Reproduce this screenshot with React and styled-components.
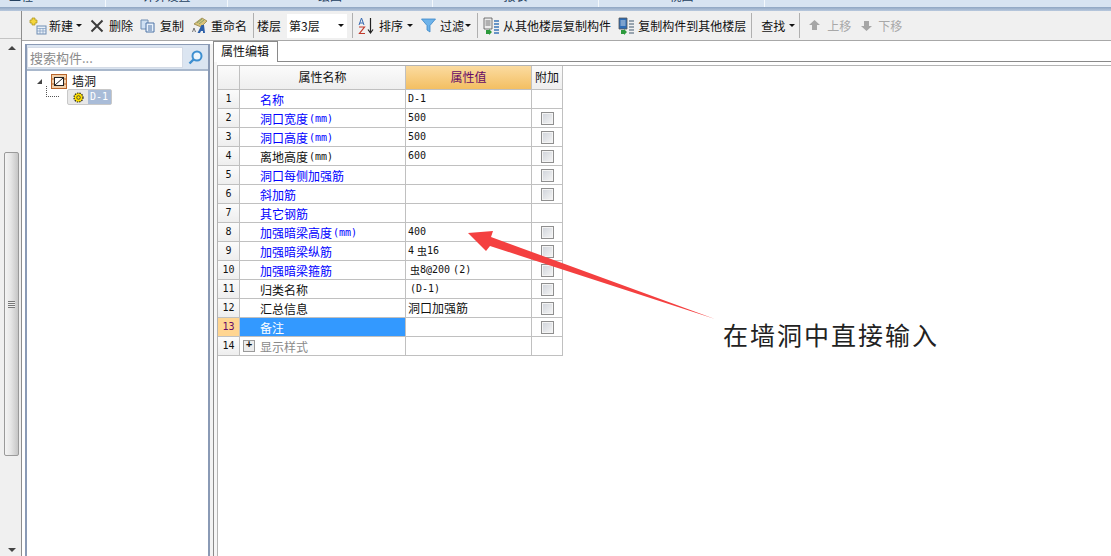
import React from "react";
import styled, { createGlobalStyle } from "styled-components";

const Global = createGlobalStyle`
  html, body { margin: 0; padding: 0; background: #fff; overflow: hidden; }
  body { font-family: "Noto Sans CJK SC", "Liberation Sans", sans-serif; font-size: 12px; color: #111; }
  * { box-sizing: border-box; }
`;

const Page = styled.div`
  position: relative;
  width: 1111px;
  height: 556px;
  display: flex;
  flex-direction: column;
  overflow: hidden;
`;

const TopTabs = styled.div`
  height: 7px;
  flex: none;
  display: flex;
  background: #d7e3f1;
`;

const TopTab = styled.div`
  width: ${(p) => p.$w}px;
  flex: none;
  overflow: hidden;
  border-right: 1px solid #f4f8fc;
  text-align: ${(p) => (p.$left ? "left" : "center")};
  padding-left: ${(p) => (p.$left ? 9 : 0)}px;
  color: #24405f;
  font-size: 12px;
  line-height: 12px;
`;

const TopLabel = styled.div`
  margin-top: -10px;
`;

const Band = styled.div`
  height: 4px;
  flex: none;
  background: linear-gradient(#8fa5c2, #b9c9de);
`;

const Main = styled.div`
  flex: 1;
  display: flex;
  min-height: 0;
`;

const Rail = styled.div`
  width: 22px;
  flex: none;
  background: #f0f0f0;
  border-right: 1px solid #8d8d8d;
  display: flex;
  flex-direction: column;
`;

const RailHead = styled.div`
  height: 28px;
  flex: none;
  border-bottom: 1px solid #c4c4c4;
`;

const Track = styled.div`
  flex: 1;
  margin: 0 2px 0 4px;
  display: flex;
  flex-direction: column;
  align-items: center;
  padding-top: 7px;
`;

const Thumb = styled.div`
  width: 15px;
  height: 304px;
  margin-top: 102px;
  border: 1px solid #9a9a9a;
  border-radius: 2px;
  background: linear-gradient(90deg, #f4f4f4, #e6e6e6 45%, #c6c6c6);
  display: flex;
  align-items: center;
  justify-content: center;
`;

const Grip = styled.div`
  width: 7px;
  height: 7px;
  background: repeating-linear-gradient(#777 0 1px, #eee 1px 2px);
`;

const Arrow = styled.div`
  width: 0;
  height: 0;
  border-left: 4px solid transparent;
  border-right: 4px solid transparent;
  ${(p) => (p.$down ? "border-top: 4px solid #444;" : "border-bottom: 4px solid #444;")}
  margin-top: ${(p) => p.$mt || 0}px;
`;

const Work = styled.div`
  flex: 1;
  display: flex;
  flex-direction: column;
  min-width: 0;
`;

const Toolbar = styled.div`
  height: 30px;
  flex: none;
  display: flex;
  align-items: center;
  background: #f0f0f0;
  border-bottom: 1px solid #a8a8a8;
  padding-left: 7px;
  white-space: nowrap;
`;

const Tool = styled.div`
  display: flex;
  align-items: center;
  height: 20px;
  flex: none;
  gap: ${(p) => p.$gap ?? 3}px;
  margin-left: ${(p) => p.$ml || 0}px;
  color: ${(p) => (p.$off ? "#a8a8a8" : "#111")};
`;

const Caret = styled.span`
  width: 0;
  height: 0;
  margin-left: ${(p) => p.$ml ?? 1}px;
  border-left: 3px solid transparent;
  border-right: 3px solid transparent;
  border-top: 3px solid #111;
`;

const Sep = styled.div`
  width: 1px;
  height: 25px;
  flex: none;
  background: #b0b0b0;
  margin-left: ${(p) => p.$ml}px;
`;

const FloorSelect = styled.div`
  width: 60px;
  height: 24px;
  flex: none;
  margin-left: 6px;
  padding: 0 3px 0 2px;
  background: #fff;
  display: flex;
  align-items: center;
  justify-content: space-between;
`;

const Body = styled.div`
  flex: 1;
  display: flex;
  min-height: 0;
`;

const TreePanel = styled.div`
  width: 185px;
  flex: none;
  margin: 3px 0 0 3px;
  border: 1px solid #8a9ab5;
  border-width: 1px 2px 0 2px;
  display: flex;
  flex-direction: column;
`;

const SearchRow = styled.div`
  height: 26px;
  flex: none;
  display: flex;
  background: #dbe5f1;
  padding: 2px 0 1px 0;
  border-bottom: 2px solid #a9b8cc;
`;

const SearchInput = styled.div`
  width: 156px;
  flex: none;
  background: #fff;
  border: 1px solid #d4dbe6;
  color: #8b8b8b;
  font-size: 13px;
  line-height: 19px;
  padding-left: 2px;
`;

const SearchBtn = styled.div`
  flex: 1;
  display: flex;
  align-items: center;
  justify-content: center;
`;

const TreeBody = styled.div`
  flex: 1;
  padding: 2px 0 0 10px;
  background: #fff;
`;

const TreeRow = styled.div`
  position: relative;
  display: flex;
  align-items: center;
  height: 16px;
`;

const TreeLabel = styled.span`
  margin: -2px 0 0 5px;
`;

const Dots = styled.div`
  position: absolute;
  left: 9px;
  top: -3px;
  width: 13px;
  height: 11px;
  border-left: 1px dotted #555;
  border-bottom: 1px dotted #555;
`;

const Expand = styled.div`
  width: 0;
  height: 0;
  border-left: 5px solid transparent;
  border-bottom: 5px solid #444;
  margin-right: 9px;
`;

const Pill = styled.div`
  display: flex;
  height: 16px;
  margin-left: 30px;
  border: 1px solid #c8c8c8;
  border-radius: 2px;
  background: #e8e8e8;
`;

const PillIcon = styled.div`
  width: 20px;
  display: flex;
  align-items: center;
  justify-content: center;
`;

const PillLabel = styled.div`
  width: 23px;
  background: #a9bcd8;
  color: #fff;
  font-family: "DejaVu Sans Mono", monospace;
  font-size: 10px;
  line-height: 14px;
  padding-left: 2px;
`;

const Splitter = styled.div`
  width: 3px;
  flex: none;
  margin-top: 3px;
  background: #f3f3f3;
`;

const Content = styled.div`
  flex: 1;
  min-width: 0;
  display: flex;
  flex-direction: column;
  border-left: 1px solid #8a8a8a;
`;

const TabLine = styled.div`
  height: 21px;
  flex: none;
  display: flex;
`;

const Tab = styled.div`
  width: 64px;
  flex: none;
  border-top: 1px solid #8a8a8a;
  border-right: 1px solid #8a8a8a;
  background: #fff;
  padding-left: 7px;
  font-size: 12px;
  line-height: 18px;
`;

const TabRest = styled.div`
  flex: 1;
  border-bottom: 1px solid #8a8a8a;
`;

const Pane = styled.div`
  flex: 1;
  min-height: 0;
  padding: 3px 0 0 3px;
  background: linear-gradient(90deg, #f6f6f6 3px, #fff 3px);
`;

const Sheet = styled.div`
  height: 100%;
  background: #fff;
  border-top: 1px solid #b4b4b4;
  border-left: 1px solid #b4b4b4;
`;

const Grid = styled.div`
  width: 345px;
  display: grid;
  grid-template-columns: 22px 166px 126px 31px;
  grid-auto-rows: 19px;
  grid-template-rows: 24px;
`;

const Head = styled.div`
  border-right: 1px solid #c0c0c0;
  border-bottom: 1px solid #c0c0c0;
  background: ${(p) => (p.$on ? "linear-gradient(#fbdba0, #f3bf62)" : "linear-gradient(#fbfbfb, #eeeeee)")};
  color: ${(p) => (p.$on ? "#660a66" : "#111")};
  font-size: 12px;
  line-height: 22px;
  text-align: center;
`;

const Num = styled.div`
  border-right: 1px solid #c0c0c0;
  border-bottom: 1px solid #c0c0c0;
  background: ${(p) => (p.$on ? "#ffd591" : "linear-gradient(#fbfbfb, #eeeeee)")};
  color: ${(p) => (p.$on ? "#660a66" : "#111")};
  font-family: "DejaVu Sans Mono", monospace;
  font-size: 10px;
  line-height: 18px;
  text-align: center;
`;

const NameCell = styled.div`
  border-right: 1px solid #c0c0c0;
  border-bottom: 1px solid #c0c0c0;
  background: ${(p) => (p.$on ? "#3399ff" : "#fff")};
  color: ${(p) => p.$color};
  line-height: 19px;
  padding-left: ${(p) => p.$pl ?? 20}px;
  display: flex;
  align-items: center;
  white-space: nowrap;
`;

const ValueCell = styled.div`
  border-right: 1px solid #c0c0c0;
  border-bottom: 1px solid #c0c0c0;
  line-height: 18px;
  padding-left: 2px;
  white-space: nowrap;
  display: flex;
  align-items: center;
`;

const CheckCell = styled.div`
  border-right: 1px solid #c0c0c0;
  border-bottom: 1px solid #c0c0c0;
  display: flex;
  align-items: center;
  justify-content: center;
`;

const Check = styled.div`
  width: 13px;
  height: 13px;
  border: 1px solid #8f8f8f;
  box-shadow: inset 0 0 0 1px #f4f4f4;
  background: linear-gradient(135deg, #cfd3da, #f6f6f6);
`;

const Lat = styled.span`
  font-family: "DejaVu Sans Mono", monospace;
  font-size: 10px;
  margin-left: ${(p) => p.$ml || 0}px;
`;

const Rebar = styled.span`
  font-size: 10px;
  margin: 0 ${(p) => p.$mr || 0}px 0 ${(p) => p.$ml || 0}px;
`;

const PlusBox = styled.div`
  width: 12px;
  height: 12px;
  margin-right: 5px;
  border: 1px solid #9a9a9a;
  background: #ececec;
  color: #111;
  font: 700 11px/9px "Liberation Mono", monospace;
  text-align: center;
`;

const Callout = styled.svg`
  position: absolute;
  left: 460px;
  top: 225px;
`;

const Note = styled.div`
  position: absolute;
  left: 723px;
  top: 317px;
  font-size: 25px;
  line-height: 34px;
  letter-spacing: 2px;
  color: #222;
  white-space: nowrap;
`;

const NewIcon = () => (
  <svg width="18" height="18" viewBox="0 0 18 18">
    <path d="M3 1h3v2h2v3H6v2H3V6H1V3h2z" fill="#f5d63d" stroke="#a8901a" strokeWidth=".7" />
    <rect x="8" y="9" width="9" height="8" fill="#e9f0f8" stroke="#6f8db3" />
    <path d="M8 11.5h9M8 14h9M11 11v6M14 11v6" stroke="#7f9cc0" strokeWidth=".7" />
  </svg>
);

const DeleteIcon = () => (
  <svg width="14" height="14" viewBox="0 0 14 14">
    <path d="M1.5 1.5l11 11M12.5 1.5l-11 11" stroke="#3c3c3c" strokeWidth="2" />
  </svg>
);

const CopyIcon = () => (
  <svg width="16" height="14" viewBox="0 0 16 14">
    <path d="M1 1h7v9H1z" fill="#cfe0f3" stroke="#6f8db3" />
    <path d="M6 4h8v9H6z" fill="#e8f1fb" stroke="#4f74a6" />
    <path d="M8 7h4M8 9h4M8 11h4" stroke="#3f669c" strokeWidth=".9" />
  </svg>
);

const RenameIcon = () => (
  <svg width="17" height="17" viewBox="0 0 17 17">
    <path d="M3 7l8-6 5 3-6 6z" fill="#d9c27a" stroke="#8d7a3a" strokeWidth=".7" />
    <path d="M6 6l5-4M8 7l5-4" stroke="#6f9a6a" strokeWidth=".8" />
    <path d="M1.500 15l1.500-4 1.500 4" fill="none" stroke="#666" strokeWidth=".9" />
    <path d="M6.500 16l4-8h2.500l1 8h-2v-2H10l-1 2z" fill="#2c5fa8" />
  </svg>
);

const SortIcon = () => (
  <svg width="16" height="18" viewBox="0 0 16 18">
    <path d="M3.5 1L1 8M3.5 1L6 8M2 6h3" fill="none" stroke="#3568b0" strokeWidth="1" />
    <path d="M1 10h5.500L1.500 16.500H7" fill="none" stroke="#c0392b" strokeWidth="1.200" />
    <path d="M12.500 1v14M10 12.500l2.500 3.500 2.500-3.500" fill="none" stroke="#222" strokeWidth="1.200" />
  </svg>
);

const FunnelIcon = () => (
  <svg width="15" height="15" viewBox="0 0 15 15">
    <path d="M.5 1h14L9 7.500V14l-3-2V7.500z" fill="#6db3ea" stroke="#3b86c8" strokeWidth=".8" />
  </svg>
);

const FloorCopyIcon = ({ blue }) => (
  <svg width="17" height="18" viewBox="0 0 17 18">
    <path d="M1 1h8v11H1z" fill={blue ? "#2d6cb5" : "#ececec"} stroke="#555" strokeWidth=".8" />
    <path d="M2.500 4h5M2.500 6h5M2.500 8h5" stroke={blue ? "#f4f4f4" : "#555"} strokeWidth=".8" />
    <path d="M11 4h5M11 7h5M11 10h5M11 13h5M11 16h5" stroke={blue ? "#7b8a99" : "#3a75b8"} strokeWidth="1.300" />
    <path d="M3 13h3v-1l3 3-3 3v-1H3z" fill="#2c9a3c" />
  </svg>
);

const MoveIcon = ({ down }) => (
  <svg width="11" height="11" viewBox="0 0 11 11">
    <path d={down ? "M3 1h5v5h3l-5.500 5L0 6h3z" : "M3 10h5V5h3L5.500 0 0 5h3z"} fill="#a6a6a6" />
  </svg>
);

const SearchIcon = () => (
  <svg width="15" height="15" viewBox="0 0 15 15">
    <circle cx="9" cy="6" r="4.500" fill="#eef6fc" stroke="#3d8fd0" strokeWidth="2" />
    <path d="M5.500 9.500L1.500 13.500" stroke="#3d8fd0" strokeWidth="2.400" />
  </svg>
);

const WallIcon = () => (
  <svg width="16" height="15" viewBox="0 0 16 15">
    <rect x=".5" y=".5" width="15" height="14" fill="#f2cfa8" stroke="#b8642a" />
    <path d="M0 5h3M0 10h3M13 5h3M13 10h3" stroke="#b8642a" />
    <rect x="3.500" y="3.500" width="9" height="8" fill="#fff" stroke="#222" />
    <path d="M4 11l8-7" stroke="#222" />
  </svg>
);

const GearIcon = () => (
  <svg width="11" height="11" viewBox="0 0 11 11">
    <circle cx="5.500" cy="5.500" r="4.500" fill="#ffe100" stroke="#222" strokeWidth="1.200" strokeDasharray="1.400 1" />
    <circle cx="5.500" cy="5.500" r="1.800" fill="#ffe100" stroke="#333" strokeWidth=".8" />
  </svg>
);

const BLUE = "#0000ff";
const BLACK = "#111";

const topTabs = [
  { w: 106, label: "工程", left: true },
  { w: 122, label: "计算设置" },
  { w: 205, label: "绘图" },
  { w: 166, label: "报表" },
  { w: 166, label: "视图" },
];

const rows = [
  { name: "名称", color: BLUE, value: <Lat>D-1</Lat> },
  { name: "洞口宽度", unit: true, color: BLUE, value: <Lat>500</Lat>, check: true },
  { name: "洞口高度", unit: true, color: BLUE, value: <Lat>500</Lat>, check: true },
  { name: "离地高度", unit: true, color: BLACK, value: <Lat>600</Lat>, check: true },
  { name: "洞口每侧加强筋", color: BLUE, check: true },
  { name: "斜加筋", color: BLUE, check: true },
  { name: "其它钢筋", color: BLUE },
  { name: "加强暗梁高度", unit: true, color: BLUE, value: <Lat>400</Lat>, check: true },
  {
    name: "加强暗梁纵筋",
    color: BLUE,
    value: (
      <>
        <Lat>4</Lat>
        <Rebar $ml={3}>虫</Rebar>
        <Lat>16</Lat>
      </>
    ),
    check: true,
  },
  {
    name: "加强暗梁箍筋",
    color: BLUE,
    value: (
      <>
        <Rebar $ml={2}>虫</Rebar>
        <Lat>8@200</Lat>
        <Lat $ml={3}>(2)</Lat>
      </>
    ),
    check: true,
  },
  { name: "归类名称", color: BLACK, value: <Lat $ml={2}>(D-1)</Lat>, check: true },
  { name: "汇总信息", color: BLACK, value: "洞口加强筋", check: true },
  { name: "备注", color: "#fff", selected: true, check: true },
  { name: "显示样式", color: "#8a8a8a", plus: true },
];

export default function App() {
  return (
    <Page>
      <Global />
      <TopTabs>
        {topTabs.map((t) => (
          <TopTab key={t.label} $w={t.w} $left={t.left}>
            <TopLabel>{t.label}</TopLabel>
          </TopTab>
        ))}
      </TopTabs>
      <Band />
      <Main>
        <Rail>
          <RailHead />
          <Track>
            <Arrow />
            <Thumb>
              <Grip />
            </Thumb>
            <Arrow $down $mt={92} />
          </Track>
        </Rail>
        <Work>
          <Toolbar>
            <Tool $gap={2}>
              <NewIcon />
              新建
              <Caret />
            </Tool>
            <Tool $ml={8} $gap={5}>
              <DeleteIcon />
              删除
            </Tool>
            <Tool $ml={7} $gap={4}>
              <CopyIcon />
              复制
            </Tool>
            <Tool $ml={7} $gap={3}>
              <RenameIcon />
              重命名
            </Tool>
            <Sep $ml={6} />
            <Tool $ml={3}>楼层</Tool>
            <FloorSelect>
              第3层
              <Caret />
            </FloorSelect>
            <Sep $ml={5} />
            <Tool $ml={5} $gap={5}>
              <SortIcon />
              排序
              <Caret $ml={-1} />
            </Tool>
            <Tool $ml={8} $gap={4}>
              <FunnelIcon />
              过滤
              <Caret $ml={-3} />
            </Tool>
            <Sep $ml={6} />
            <Tool $ml={5} $gap={3}>
              <FloorCopyIcon />
              从其他楼层复制构件
            </Tool>
            <Tool $ml={7} $gap={3}>
              <FloorCopyIcon blue />
              复制构件到其他楼层
            </Tool>
            <Sep $ml={5} />
            <Tool $ml={9} $gap={3}>
              查找
              <Caret />
            </Tool>
            <Sep $ml={4} />
            <Tool $ml={9} $gap={7} $off>
              <MoveIcon />
              上移
            </Tool>
            <Tool $ml={10} $gap={6} $off>
              <MoveIcon down />
              下移
            </Tool>
          </Toolbar>
          <Body>
            <TreePanel>
              <SearchRow>
                <SearchInput>搜索构件...</SearchInput>
                <SearchBtn>
                  <SearchIcon />
                </SearchBtn>
              </SearchRow>
              <TreeBody>
                <TreeRow>
                  <Expand />
                  <WallIcon />
                  <TreeLabel>墙洞</TreeLabel>
                </TreeRow>
                <TreeRow>
                  <Dots />
                  <Pill>
                    <PillIcon>
                      <GearIcon />
                    </PillIcon>
                    <PillLabel>D-1</PillLabel>
                  </Pill>
                </TreeRow>
              </TreeBody>
            </TreePanel>
            <Splitter />
            <Content>
              <TabLine>
                <Tab>属性编辑</Tab>
                <TabRest />
              </TabLine>
              <Pane>
                <Sheet>
                  <Grid>
                    <Head />
                    <Head>属性名称</Head>
                    <Head $on>属性值</Head>
                    <Head>附加</Head>
                    {rows.map((row, i) => (
                      <React.Fragment key={row.name}>
                        <Num $on={row.selected}>{i + 1}</Num>
                        <NameCell $color={row.color} $on={row.selected} $pl={row.plus ? 3 : 20}>
                          {row.plus && <PlusBox>+</PlusBox>}
                          {row.name}
                          {row.unit && <Lat $ml={1}>(mm)</Lat>}
                        </NameCell>
                        <ValueCell>{row.value}</ValueCell>
                        <CheckCell>{row.check && <Check />}</CheckCell>
                      </React.Fragment>
                    ))}
                  </Grid>
                </Sheet>
              </Pane>
            </Content>
          </Body>
        </Work>
      </Main>
      <Callout width="260" height="100" viewBox="460 225 260 100">
        <polygon points="468,233 493,231 491,237 715,319 490,246 486,251" fill="#f44040" />
      </Callout>
      <Note>在墙洞中直接输入</Note>
    </Page>
  );
}
